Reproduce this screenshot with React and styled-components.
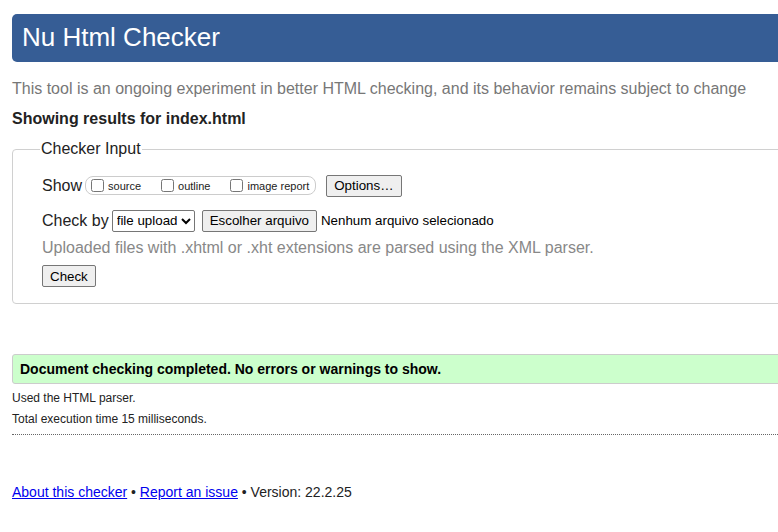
import React from 'react'
import styled, { createGlobalStyle } from 'styled-components'

const GlobalStyle = createGlobalStyle`
  html, body {
    margin: 0;
    padding: 0;
    overflow: hidden;
    background: #fff;
  }
  body {
    font-family: "Liberation Sans", Arial, sans-serif;
    color: #222;
  }
`;

export default function App() {
  return (
    <>
      <GlobalStyle />
      <Page>
        <Header>Nu Html Checker</Header>
        <Intro>This tool is an ongoing experiment in better HTML checking, and its behavior remains subject to change</Intro>
        <Showing>Showing results for index.html</Showing>

        <Fieldset>
          <Legend>Checker Input</Legend>
          <Row>
            <Label>Show</Label>
            <ShowBox>
              <Option><input type="checkbox" />source</Option>
              <Option><input type="checkbox" />outline</Option>
              <Option><input type="checkbox" />image report</Option>
            </ShowBox>
            <Button $ml={10}>Options…</Button>
          </Row>
          <Row $mt={12}>
            <Label>Check by</Label>
            <Select defaultValue="file">
              <option value="file">file upload</option>
            </Select>
            <Button $ml={7}>Escolher arquivo</Button>
            <FileName>Nenhum arquivo selecionado</FileName>
          </Row>
          <Hint>Uploaded files with .xhtml or .xht extensions are parsed using the XML parser.</Hint>
          <Button>Check</Button>
        </Fieldset>

        <Success>Document checking completed. No errors or warnings to show.</Success>
        <Details>
          <p>Used the HTML parser.</p>
          <p>Total execution time 15 milliseconds.</p>
        </Details>

        <Footer>
          <a href="#">About this checker</a> • <a href="#">Report an issue</a> • Version: 22.2.25
        </Footer>
      </Page>
    </>
  );
}

const Page = styled.div`
  width: 1000px;
  padding: 14px 0 20px 12px;
`;

const Header = styled.h1`
  margin: 0;
  height: 48px;
  line-height: 47px;
  padding-left: 10px;
  background: #365d95;
  color: #fff;
  border-radius: 5px;
  font-size: 26px;
  font-weight: normal;
`;

const Intro = styled.p`
  margin: 18px 0 0;
  font-size: 16px;
  color: #777;
  white-space: nowrap;
`;

const Showing = styled.h2`
  margin: 12px 0 0;
  font-size: 16px;
  font-weight: bold;
  color: #222;
`;

const Fieldset = styled.fieldset`
  margin: 12px 0 0;
  padding: 0 29px 16px;
  border: 1px solid #d0d0d0;
  border-radius: 4px;
`;

const Legend = styled.legend`
  padding: 0 1px;
  margin-left: -2px;
  font-size: 16px;
  color: #222;
`;

const Row = styled.div`
  display: flex;
  align-items: center;
  height: 23px;
  margin-top: ${p => p.$mt ?? 16}px;
  font-size: 16px;
`;

const Label = styled.span`
  font-size: 16px;
  color: #222;
  margin-right: 3px;
`;

const ShowBox = styled.span`
  display: inline-flex;
  align-items: center;
  gap: 20px;
  height: 17px;
  padding: 0 6px 0 5px;
  border: 1px solid #ccc;
  border-radius: 8px;
`;

const Option = styled.label`
  display: inline-flex;
  align-items: center;
  font-size: 11px;
  color: #222;

  & input {
    margin: 0 4px 0 0;
    width: 13px;
    height: 13px;
  }
`;

const Button = styled.button`
  height: 22px;
  margin-left: ${p => p.$ml ?? 0}px;
  padding: 0 7px;
  font-family: "Liberation Sans", Arial, sans-serif;
  font-size: 13.33px;
  color: #000;
  background: #efefef;
  border: 1px solid #767676;
  border-radius: 2px;
`;

const Select = styled.select`
  height: 22px;
  font-family: "Liberation Sans", Arial, sans-serif;
  font-size: 13.33px;
  color: #000;
  background: #fff;
  border: 1px solid #767676;
  border-radius: 2px;
`;

const FileName = styled.span`
  margin-left: 4px;
  font-size: 13.33px;
  color: #000;
`;

const Hint = styled.p`
  margin: 7px 0 8px;
  font-size: 16px;
  color: #888;
`;

const Success = styled.div`
  margin-top: 50px;
  height: 28px;
  line-height: 28px;
  padding-left: 7px;
  background: #ccffcc;
  border: 1px solid #ccc;
  border-radius: 3px 0 0 3px;
  font-size: 14px;
  font-weight: bold;
  color: #000;
`;

const Details = styled.div`
  margin-top: 7px;
  padding-bottom: 8px;
  border-bottom: 1px dotted #666;
  font-size: 12px;
  color: #222;

  & p {
    margin: 0 0 7px;
  }
  & p:last-child {
    margin: 0;
  }
`;

const Footer = styled.p`
  margin: 49px 0 0;
  font-size: 14px;
  color: #222;

  & a {
    color: #00e;
  }
`;
